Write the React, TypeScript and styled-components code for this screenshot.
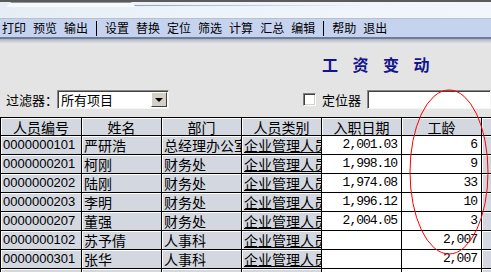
import { Fragment } from "react";
import styled, { createGlobalStyle } from "styled-components";

type Staff = {
  id: string;
  name: string;
  dept: string;
  kind: string;
  joined: string;
  years: string;
};

const rows: Staff[] = [
  { id: "0000000101", name: "严研浩", dept: "总经理办公室", kind: "企业管理人员", joined: "2,001.03", years: "6" },
  { id: "0000000201", name: "柯刚", dept: "财务处", kind: "企业管理人员", joined: "1,998.10", years: "9" },
  { id: "0000000202", name: "陆刚", dept: "财务处", kind: "企业管理人员", joined: "1,974.08", years: "33" },
  { id: "0000000203", name: "李明", dept: "财务处", kind: "企业管理人员", joined: "1,996.12", years: "10" },
  { id: "0000000207", name: "董强", dept: "财务处", kind: "企业管理人员", joined: "2,004.05", years: "3" },
  { id: "0000000102", name: "苏予倩", dept: "人事科", kind: "企业管理人员", joined: "", years: "2,007" },
  { id: "0000000301", name: "张华", dept: "人事科", kind: "企业管理人员", joined: "", years: "2,007" },
  { id: "0000000302", name: "陈东", dept: "人事科", kind: "企业管理人员", joined: "", years: "2,007" },
];

const menuGroups = [
  ["打印", "预览", "输出"],
  ["设置", "替换", "定位", "筛选", "计算", "汇总", "编辑"],
  ["帮助", "退出"],
];

const GlobalStyle = createGlobalStyle`
  html, body {
    margin: 0;
    padding: 0;
    background: #e4e4e4;
  }
  body {
    font-family: "Noto Sans CJK SC", "Liberation Sans", sans-serif;
    color: #000;
  }
`;

const Page = styled.div`
  position: relative;
  width: 491px;
  height: 272px;
  overflow: hidden;
  display: flex;
  flex-direction: column;
  background: #e4e4e4;

  & > * {
    flex-shrink: 0;
  }
`;

const TopStrip = styled.div`
  height: 16px;
  border-top: 2px solid #5b5b5b;
  background: linear-gradient(to right, #e6edf5 0%, #edf3fa 40%, #f1f6fc 100%);
  display: flex;
  flex-direction: column;
  border-bottom: 1px solid #b9c0c8;
  box-sizing: content-box;
`;

const Tab = styled.div`
  margin-left: 6px;
  width: 130px;
  height: 5px;
  background: linear-gradient(to bottom, #8f979f 0, #8f979f 1px, #f7f9fb 1px);
  clip-path: polygon(0 100%, 4% 0, 96% 0, 100% 100%);
`;

const TabLine = styled.div`
  margin-top: -2px;
  margin-left: 134px;
  width: 230px;
  height: 1px;
  background: linear-gradient(to right, #9aa3ab, rgba(154, 163, 171, 0));
`;

const Toolbar = styled.div`
  height: 18px;
  display: flex;
  align-items: center;
  gap: 7px;
  padding-left: 2px;
  background: #c6d3ef;
  font-size: 12px;
  line-height: 18px;
`;

const MenuItem = styled.span`
  white-space: nowrap;
`;

const Divider = styled.span`
  width: 1px;
  height: 15px;
  background: #000;
  margin: 0 1px;
`;

const ToolbarEdge = styled.div`
  height: 6px;
  background: linear-gradient(
    to bottom,
    #6f7c98 0,
    #6f7c98 2px,
    #a9b1c2 2px,
    #c5cad4 4px,
    #dcdde0 6px
  );
`;

const TitleRow = styled.div`
  height: 46px;
  box-sizing: border-box;
  padding: 13px 0 0 322px;
`;

const Title = styled.h1`
  margin: 0;
  font-size: 16px;
  line-height: 16px;
  font-weight: 700;
  letter-spacing: 14.5px;
  color: #14148c;
  white-space: nowrap;
`;

const FilterRow = styled.div`
  height: 28px;
  box-sizing: border-box;
  padding: 1px 0 0 6px;
  display: flex;
  align-items: flex-start;
  font-size: 13px;
`;

const Label = styled.span<{ $width: number }>`
  width: ${(p) => p.$width}px;
  height: 19px;
  line-height: 19px;
  white-space: nowrap;
  flex-shrink: 0;
`;

const Field = styled.div<{ $width?: number }>`
  height: 19px;
  box-sizing: border-box;
  ${(p) => (p.$width ? `width: ${p.$width}px;` : "flex: 1;")}
  flex-shrink: 0;
  display: flex;
  align-items: center;
  justify-content: space-between;
  background: #fff;
  border-top: 1px solid #8a8a8a;
  border-left: 1px solid #8a8a8a;
  border-bottom: 1px solid #f4f4f4;
  border-right: 1px solid #f4f4f4;
  box-shadow: inset 1px 1px 0 #404040;
  padding: 0 1px 0 3px;
  font-size: 13px;
  line-height: 17px;
`;

const DropButton = styled.span`
  width: 16px;
  height: 15px;
  box-sizing: border-box;
  background: #d4d0c8;
  border-top: 1px solid #fff;
  border-left: 1px solid #fff;
  border-right: 1px solid #404040;
  border-bottom: 1px solid #404040;
  display: flex;
  align-items: center;
  justify-content: center;

  &::after {
    content: "";
    border-left: 4px solid transparent;
    border-right: 4px solid transparent;
    border-top: 4px solid #000;
    margin-top: 1px;
  }
`;

const CheckBox = styled.span`
  width: 13px;
  height: 13px;
  box-sizing: border-box;
  margin: 3px 6px 0 134px;
  background: #fff;
  border-top: 1px solid #808080;
  border-left: 1px solid #808080;
  border-bottom: 1px solid #fff;
  border-right: 1px solid #fff;
  box-shadow: inset 1px 1px 0 #404040, inset -1px -1px 0 #d4d0c8;
  flex-shrink: 0;
`;

const Table = styled.div`
  border-top: 1px solid #000;
  border-left: 1px solid #000;
  display: flex;
  flex-direction: column;
`;

const Row = styled.div<{ $header?: boolean }>`
  display: grid;
  grid-template-columns: 81px repeat(6, 80px);
  height: ${(p) => (p.$header ? 18 : 19)}px;
  flex-shrink: 0;
`;

type CellKind = "text" | "code" | "number";

const fontFor = (k: CellKind) =>
  k === "number"
    ? `"Liberation Mono", "DejaVu Sans Mono", monospace`
    : k === "code"
    ? `"Liberation Sans", Arial, sans-serif`
    : `"Noto Sans CJK SC", "Liberation Sans", sans-serif`;

const Cell = styled.div<{ $align?: "left" | "center" | "right"; $white?: boolean; $kind?: CellKind; $link?: boolean }>`
  box-sizing: border-box;
  border-right: 1px solid #000;
  border-bottom: 1px solid #000;
  background: ${(p) => (p.$white ? "#ffffff" : "#d3d7df")};
  box-shadow: ${(p) => (p.$white ? "none" : "inset 1px 1px 0 #ffffff")};
  text-align: ${(p) => p.$align ?? "left"};
  padding: ${(p) => (p.$align === "right" ? "0 4px 0 0" : p.$align === "center" ? "0" : "0 0 0 2px")};
  font-family: ${(p) => fontFor(p.$kind ?? "text")};
  font-size: ${(p) => (p.$kind === "code" || p.$kind === "number" ? 13 : 14)}px;
  letter-spacing: ${(p) => (p.$kind === "number" ? "-1px" : "0")};
  text-decoration: ${(p) => (p.$link ? "underline" : "none")};
  line-height: 18px;
  white-space: nowrap;
  overflow: hidden;
`;

const Circle = styled.svg`
  position: absolute;
  left: 0;
  top: 0;
  pointer-events: none;
`;

export default function App() {
  return (
    <>
      <GlobalStyle />
      <Page>
        <TopStrip>
          <Tab />
          <TabLine />
        </TopStrip>
        <Toolbar>
          {menuGroups.map((group, gi) => (
            <Fragment key={gi}>
              {gi > 0 && <Divider />}
              {group.map((item) => (
                <MenuItem key={item}>{item}</MenuItem>
              ))}
            </Fragment>
          ))}
        </Toolbar>
        <ToolbarEdge />

        <TitleRow>
          <Title>工资变动</Title>
        </TitleRow>

        <FilterRow>
          <Label $width={51}>过滤器：</Label>
          <Field $width={112}>
            <span>所有项目</span>
            <DropButton />
          </Field>
          <CheckBox />
          <Label $width={45}>定位器</Label>
          <Field />
        </FilterRow>

        <Table>
          <Row $header>
            <Cell $align="center">人员编号</Cell>
            <Cell $align="center">姓名</Cell>
            <Cell $align="center">部门</Cell>
            <Cell $align="center">人员类别</Cell>
            <Cell $align="center">入职日期</Cell>
            <Cell $align="center">工龄</Cell>
            <Cell $align="center"></Cell>
          </Row>
          {rows.map((r) => (
            <Row key={r.id}>
              <Cell $kind="code">{r.id}</Cell>
              <Cell>{r.name}</Cell>
              <Cell>{r.dept}</Cell>
              <Cell $link>{r.kind}</Cell>
              <Cell $white $kind="number" $align="right">{r.joined}</Cell>
              <Cell $white $kind="number" $align="right">{r.years}</Cell>
              <Cell></Cell>
            </Row>
          ))}
        </Table>

        <Circle width="491" height="272" viewBox="0 0 491 272">
          <ellipse cx="449" cy="172" rx="39" ry="82" fill="none" stroke="#ff0000" strokeWidth="1" />
        </Circle>
      </Page>
    </>
  );
}
